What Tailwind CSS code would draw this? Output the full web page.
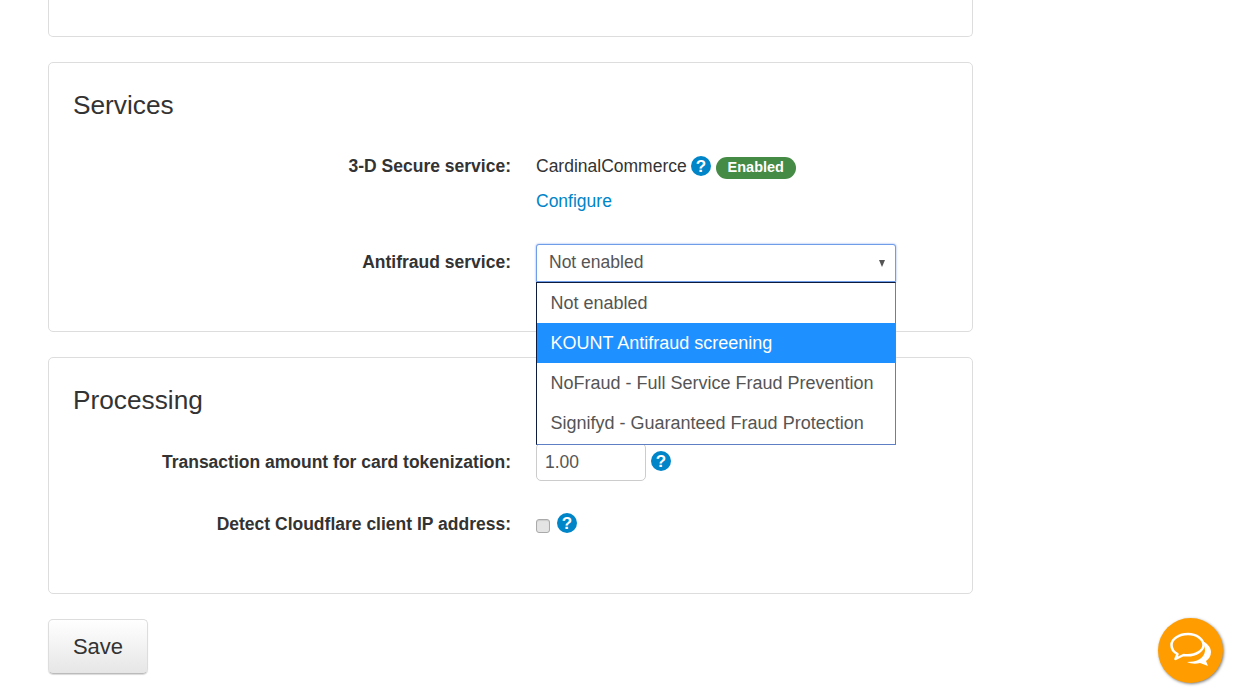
<!DOCTYPE html>
<html lang="en">
  <head>
    <meta charset="UTF-8" />
    <meta name="viewport" content="width=device-width, initial-scale=1.0"/>
    <title>Payment settings</title>
    <script src="https://cdn.jsdelivr.net/npm/@tailwindcss/browser@4"></script>
  </head>
  <body class="bg-white h-[690px] overflow-hidden relative font-['Liberation_Sans',Arial,sans-serif] text-[17.5px] text-[#333]">
    <div class="ml-[48px] w-[925px]">

      <!-- Previous card, cut off by the scroll -->
      <div class="h-[37px] border border-t-0 border-[#ddd] rounded-b-[5px]"></div>

      <!-- Services -->
      <section class="mt-[25px] h-[270px] border border-[#ddd] rounded-[5px] px-[24px] pt-[25px]">
        <h3 class="text-[26.25px] leading-[35px] text-[#333]">Services</h3>

        <div class="flex mt-[31px]">
          <div class="w-[438px] text-right font-bold leading-[25px]">3-D Secure service:</div>
          <div class="ml-[25px]">
            <div class="flex items-center h-[25px]">
              <span>CardinalCommerce</span>
              <svg class="ml-[4px] w-[20px] h-[20px] mb-[2px]" viewBox="0 0 20 20"><circle cx="10" cy="10" r="10" fill="#0085c8"/><text x="10" y="16" text-anchor="middle" font-family="Liberation Sans" font-weight="700" font-size="17" fill="#fff">?</text></svg>
              <span class="ml-[5px] mt-[2px] h-[22px] w-[80px] rounded-full bg-[#458a45] text-white font-bold text-[14.5px] leading-[21px] text-center">Enabled</span>
            </div>
            <a href="#" class="block mt-[10px] leading-[25px] text-[#0085c8]">Configure</a>
          </div>
        </div>

        <div class="flex mt-[30px]">
          <div class="w-[438px] text-right font-bold leading-[36px]">Antifraud service:</div>
          <div class="ml-[25px] relative w-[360px] z-10">
            <div class="h-[38px] border border-[#6f9de8] rounded-t-[3px] shadow-[0_0_2px_rgba(82,130,235,0.8)] pl-[12px] pb-[2px] leading-[35px] text-[#555] flex items-center justify-between bg-white">
              <span>Not enabled</span>
              <span class="w-0 h-0 border-x-[3.5px] border-x-transparent border-t-[7px] border-t-[#555] mr-[10px] mt-[2px]"></span>
            </div>
            <!-- Open dropdown list -->
            <ul class="absolute left-0 top-[38px] w-[360px] h-[163px] bg-white border border-[#5f7fc4] border-t-[#0d1b3e] border-l-[#0d1b3e] text-[18px] text-[#555]">
              <li class="h-[40px] pl-[13.500px] leading-[40px]">Not enabled</li>
              <li class="h-[40px] pl-[13.500px] leading-[40px] bg-[#1e90ff] text-white">KOUNT Antifraud screening</li>
              <li class="h-[40px] pl-[13.500px] leading-[40px]">NoFraud - Full Service Fraud Prevention</li>
              <li class="h-[40px] pl-[13.500px] leading-[40px]">Signifyd - Guaranteed Fraud Protection</li>
            </ul>
          </div>
        </div>
      </section>

      <!-- Processing -->
      <section class="mt-[25px] h-[237px] border border-[#ddd] rounded-[5px] px-[24px] pt-[25px]">
        <h3 class="text-[26.25px] leading-[35px] text-[#333]">Processing</h3>

        <div class="flex mt-[25px]">
          <div class="w-[438px] text-right font-bold leading-[38px]">Transaction amount for card tokenization:</div>
          <div class="ml-[25px] flex items-start">
            <div class="w-[110px] h-[38px] border border-[#ccc] rounded-[5px] px-[8px] leading-[36px] text-[#555]">1.00</div>
            <svg class="ml-[5px] w-[20px] h-[20px] mt-[8px]" viewBox="0 0 20 20"><circle cx="10" cy="10" r="10" fill="#0085c8"/><text x="10" y="16" text-anchor="middle" font-family="Liberation Sans" font-weight="700" font-size="17" fill="#fff">?</text></svg>
          </div>
        </div>

        <div class="flex mt-[24px]">
          <div class="w-[438px] text-right font-bold leading-[38px]">Detect Cloudflare client IP address:</div>
          <div class="ml-[25px] flex items-start">
            <span class="mt-[14px] w-[14px] h-[14px] rounded-[3px] border border-[#aaa] bg-[#e4e4e4] shadow-[inset_0_1px_1px_rgba(0,0,0,0.1)]"></span>
            <svg class="ml-[7px] w-[20px] h-[20px] mt-[8px]" viewBox="0 0 20 20"><circle cx="10" cy="10" r="10" fill="#0085c8"/><text x="10" y="16" text-anchor="middle" font-family="Liberation Sans" font-weight="700" font-size="17" fill="#fff">?</text></svg>
          </div>
        </div>
      </section>

      <button class="block mt-[25px] w-[100px] h-[55px] border border-[#ddd] border-b-[#bbb] rounded-[5px] bg-gradient-to-b from-white to-[#e6e6e6] text-[22px] text-[#333] shadow-[0_1px_1px_rgba(0,0,0,0.15)]">Save</button>
    </div>

    <!-- Chat launcher -->
    <div class="absolute left-[1158px] top-[618px] w-[65px] h-[65px] rounded-full bg-[#ff9d00] shadow-[1px_1px_3px_rgba(0,0,0,0.5)] flex items-center justify-center">
      <svg class="w-[44px] h-[38px]" viewBox="0 0 44 38">
        <path d="M33 9c5 2 9 6 9 11 0 4-2 7-5 9l2 5-8-3c-4 1-9 1-13-1 9 0 17-3 18-11 0-4-1-7-3-10z" fill="#fff"/>
        <path d="M19 2C10 2 2.500 7 2.500 13c0 4 2 7 6 9l-2 5 8-4c1 0 3 .3 4 .3 9 0 16-5 16-10.300S28 2 19 2z" fill="#ff9d00" stroke="#fff" stroke-width="2.500" stroke-linejoin="round"/>
      </svg>
    </div>
  </body>
</html>
